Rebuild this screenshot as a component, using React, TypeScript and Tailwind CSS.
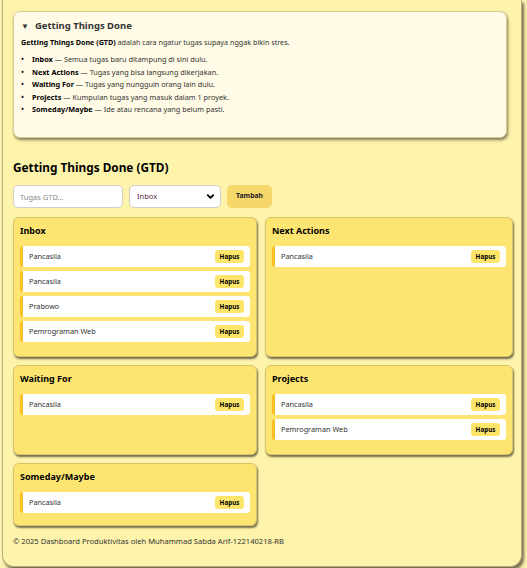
import { ChevronDown } from "lucide-react"

const columns = [
  { title: "Inbox", items: ["Pancasila", "Pancasila", "Prabowo", "Pemrograman Web"] },
  { title: "Next Actions", items: ["Pancasila"] },
  { title: "Waiting For", items: ["Pancasila"] },
  { title: "Projects", items: ["Pancasila", "Pemrograman Web"] },
  { title: "Someday/Maybe", items: ["Pancasila"] },
]

const guide = [
  { name: "Inbox", desc: "Semua tugas baru ditampung di sini dulu." },
  { name: "Next Actions", desc: "Tugas yang bisa langsung dikerjakan." },
  { name: "Waiting For", desc: "Tugas yang nungguin orang lain dulu." },
  { name: "Projects", desc: "Kumpulan tugas yang masuk dalam 1 proyek." },
  { name: "Someday/Maybe", desc: "Ide atau rencana yang belum pasti." },
]

export default function App() {
  return (
    <div className="min-h-[568px] bg-[#fdf3b0] font-['Noto_Sans',sans-serif] text-[#222]">
      <div className="mx-[2px] mr-[5px] rounded-b-[12px] border-l border-r border-b border-[#b8ad7a] bg-[#fef3ab] px-[10px] pt-[11px] pb-[20px] shadow-[2px_3px_3px_rgba(0,0,0,0.55)]">
        {/* GTD info */}
        <div className="mr-[4px] h-[127px] rounded-[7px] border border-[#d8cd93] bg-[#fffbe6] px-[7px] pt-[8px] shadow-[1px_2px_3px_rgba(0,0,0,0.5)]">
          <div className="flex items-center gap-[6px] text-[9.5px] font-bold leading-[12px] text-[#333]">
            <span className="text-[8px]">▼</span>
            <span>Getting Things Done</span>
          </div>
          <p className="mt-[5px] text-[7.2px] leading-[10px] text-[#333]">
            <b className="text-black">Getting Things Done (GTD)</b> adalah cara ngatur tugas supaya nggak bikin stres.
          </p>
          <ul className="mt-[7px] flex flex-col gap-[2.6px]">
            {guide.map((g) => (
              <li key={g.name} className="flex items-center text-[7.3px] leading-[10px] text-[#333]">
                <span className="w-[11px] text-[8px] text-black">•</span>
                <b className="text-black">{g.name}</b>
                <span>&nbsp;— {g.desc}</span>
              </li>
            ))}
          </ul>
        </div>

        <h1 className="mt-[21px] text-[11.8px] font-bold leading-[16px] text-black">Getting Things Done (GTD)</h1>

        <div className="mt-[10px] flex items-center gap-[6px]">
          <input
            placeholder="Tugas GTD..."
            className="h-[23px] w-[110px] rounded-[5px] border border-[#ccc] bg-white px-[6px] text-[7.5px] text-[#333] placeholder:text-[#888] outline-none"
          />
          <div className="relative flex h-[23px] w-[92px] items-center rounded-[5px] border border-[#ccc] bg-white px-[7px] text-[7.5px] text-[#5a2a4a]">
            Inbox
            <ChevronDown className="absolute right-[4px] h-[11px] w-[11px] text-black" strokeWidth={4} />
          </div>
          <button className="h-[23px] w-[45px] rounded-[5px] bg-[#f6d769] text-[6.8px] font-bold text-[#222]">Tambah</button>
        </div>

        <div className="mt-[9px] grid grid-cols-[244px_248px] gap-x-[8px] gap-y-[8px]">
          {columns.map((c, i) => (
            <div
              key={c.title}
              className={`rounded-[6px] border border-[#d7c46a] bg-[#fee572] px-[6px] pt-[6px] pb-[12px] shadow-[1px_2px_2px_rgba(0,0,0,0.55)] ${i < 2 ? "min-h-[140px]" : i < 4 ? "min-h-[90px]" : ""}`}
            >
              <h2 className="text-[9px] font-bold leading-[14px] text-black">{c.title}</h2>
              <div className="mt-[8px] flex flex-col gap-[4px]">
                {c.items.map((it, j) => (
                  <div
                    key={j}
                    className="flex h-[21px] items-center justify-between rounded-[3px] border-l-[3px] border-[#fbbf24] bg-white pl-[6px] pr-[6px]"
                  >
                    <span className="text-[7.3px] text-[#333]">{it}</span>
                    <button className="flex h-[13px] w-[29px] items-center justify-center rounded-[3px] bg-[#fde569] text-[6.3px] font-bold text-black">
                      Hapus
                    </button>
                  </div>
                ))}
              </div>
            </div>
          ))}
        </div>

        <footer className="mt-[10px] text-[7.6px] leading-[10px] text-[#333]">
          © 2025 Dashboard Produktivitas oleh Muhammad Sabda Arif-122140218-RB
        </footer>
      </div>
    </div>
  )
}
